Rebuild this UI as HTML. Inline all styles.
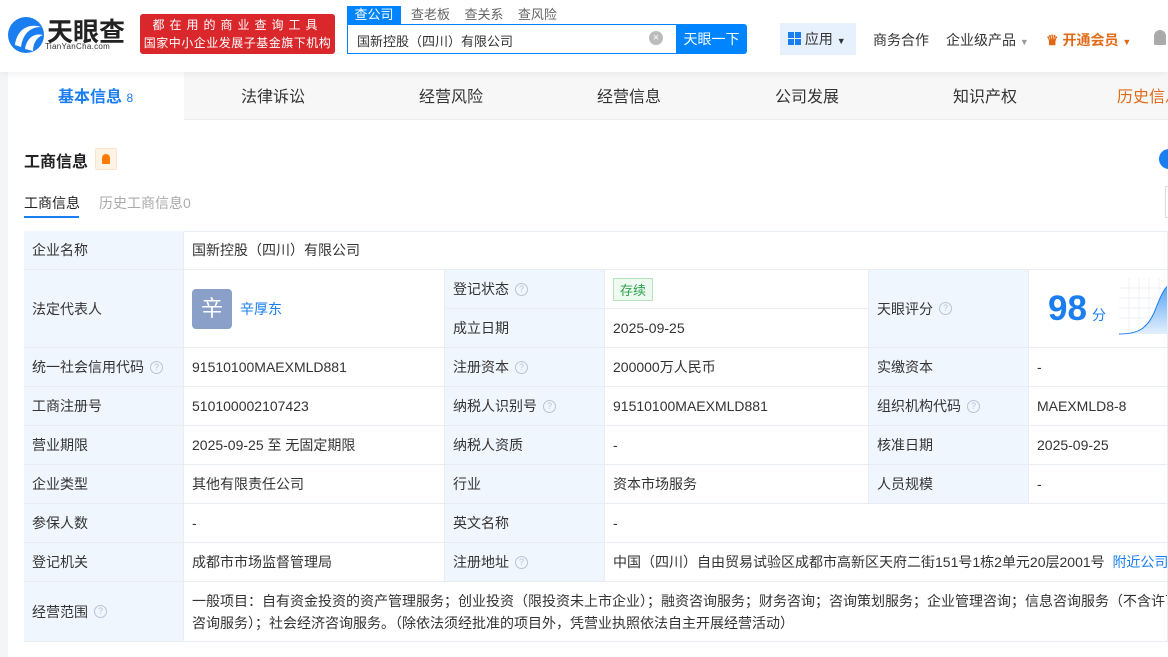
<!DOCTYPE html>
<html><head><meta charset="utf-8"><style>
*{box-sizing:border-box;margin:0;padding:0}
body{width:1168px;height:657px;overflow:hidden;background:#f4f5f7;font-family:"Liberation Sans","Noto Sans CJK SC",sans-serif;color:#333;position:relative;font-size:14px}
.a{position:absolute}
.hdr{left:0;top:0;width:1168px;height:72px;background:#fff;box-shadow:0 2px 6px rgba(0,0,0,.06);z-index:2}
.nav{left:8px;top:72px;width:1160px;height:48px;background:#f7f7f7;border-bottom:1px solid #eee}
.nav span{position:absolute;top:11px;font-size:16px;color:#333;white-space:nowrap}
.card{left:8px;top:120px;width:1160px;height:537px;background:#fff}
.c{position:absolute;border-right:1px solid #e8edf3;border-bottom:1px solid #e8edf3;padding-left:8px;display:flex;align-items:center;font-size:14px;color:#333;white-space:nowrap}
.l{background:#f0f6fe}
.q{display:inline-block;width:13px;height:13px;border:1px solid #b8c4d2;border-radius:50%;font-size:9px;color:#b8c4d2;text-align:center;line-height:11px;margin-left:6px}
</style></head><body>
<div class="a hdr">
 <svg class="a" style="left:7px;top:15px" width="38" height="40" viewBox="0 0 38 40"><circle cx="19" cy="20" r="18" fill="#1a7ef0"/><path d="M8 30 C10 14 22 8 34 12 C24 12 16 18 14 32Z" fill="#fff"/><path d="M18 34 C20 22 28 18 36 20 C30 22 26 28 26 36Z" fill="#fff"/></svg>
 <div class="a" style="left:47px;top:12px;font-size:26px;font-weight:bold;color:#222;letter-spacing:0">天眼查</div>
 <div class="a" style="left:45px;top:42px;font-size:8px;color:#333;letter-spacing:.3px">TianYanCha.com</div>
 <div class="a" style="left:140px;top:14px;width:195px;height:40px;background:#d9272b;border-radius:3px;color:#fff;font-size:12px;line-height:18px;text-align:center;padding-top:2px"><div style="letter-spacing:5px">都在用的商业查询工具</div><div style="letter-spacing:.5px">国家中小企业发展子基金旗下机构</div></div>
 <div class="a" style="left:347px;top:6px;width:54px;height:18px;background:#0084ff;color:#fff;font-size:13px;text-align:center;line-height:18px">查公司</div>
 <div class="a" style="left:411px;top:6px;font-size:13px;color:#666;line-height:18px">查老板&nbsp;&nbsp;&nbsp;&nbsp;查关系&nbsp;&nbsp;&nbsp;&nbsp;查风险</div>
 <div class="a" style="left:347px;top:24px;width:330px;height:30px;border:1px solid #0084ff;background:#fff;font-size:13px;padding:6px 9px">国新控股（四川）有限公司</div>
 <div class="a" style="left:649px;top:31px;width:14px;height:14px;border-radius:50%;background:#bbb;color:#fff;font-size:11px;text-align:center;line-height:14px">×</div>
 <div class="a" style="left:676px;top:24px;width:71px;height:30px;background:#0084ff;color:#fff;font-size:14px;text-align:center;line-height:30px;border-radius:0 3px 3px 0">天眼一下</div>
 <div class="a" style="left:780px;top:23px;width:76px;height:32px;background:#e6f1fd;font-size:14px;line-height:32px;padding-left:8px"><span style="display:inline-block;width:13px;height:13px;background:linear-gradient(#1a7ef0,#1a7ef0) 0 0/6px 6px no-repeat,linear-gradient(#1a7ef0,#1a7ef0) 7px 0/6px 6px no-repeat,linear-gradient(#1a7ef0,#1a7ef0) 0 7px/6px 6px no-repeat,linear-gradient(#1a7ef0,#1a7ef0) 7px 7px/6px 6px no-repeat;vertical-align:-1px"></span> 应用 <span style="font-size:9px">▼</span></div>
 <div class="a" style="left:873px;top:30px;font-size:14px">商务合作</div>
 <div class="a" style="left:946px;top:30px;font-size:14px">企业级产品 <span style="color:#999;font-size:9px">▼</span></div>
 <div class="a" style="left:1046px;top:30px;font-size:14px;color:#e06a15;font-weight:bold">♛ 开通会员 <span style="font-size:9px">▼</span></div>
 <div class="a" style="left:1154px;top:30px;width:12px;height:15px;background:#aaa;border-radius:6px 6px 1px 1px"></div>
</div>
<div class="a nav">
 <div class="a" style="left:0;top:0;width:176px;height:48px;background:#fff"></div>
 <span style="left:50px;color:#1a7ef0;font-weight:bold">基本信息 <small style="font-size:12px;font-weight:normal">8</small></span>
 <span style="left:233px">法律诉讼</span><span style="left:411px">经营风险</span><span style="left:589px">经营信息</span><span style="left:767px">公司发展</span><span style="left:945px">知识产权</span><span style="left:1109px;color:#e06a15">历史信息</span>
</div>
<div class="a card"></div>
<div class="a" style="left:24px;top:148px;font-size:16px;font-weight:bold;color:#222">工商信息</div>
<div class="a" style="left:95px;top:148px;width:22px;height:22px;background:#fff3e6;border:1px solid #fde2c6;border-radius:2px"><div style="margin:5px auto;width:8px;height:10px;background:#ff7a00;border-radius:4px 4px 1px 1px"></div></div>
<div class="a" style="left:1159px;top:149px;width:20px;height:20px;border-radius:50%;background:#1a7ef0"></div>
<div class="a" style="left:1165px;top:186px;width:10px;height:32px;border:1px solid #ddd"></div>
<div class="a" style="left:24px;top:193px;font-size:14px;color:#222">工商信息</div>
<div class="a" style="left:24px;top:216px;width:55px;height:2px;background:#1a7ef0"></div>
<div class="a" style="left:99px;top:193px;font-size:14px;color:#aaa">历史工商信息0</div>
<div class="a" style="left:24px;top:231px;width:1144px;border-top:1px solid #e8edf3"></div>
<div class="a" style="left:24px;top:231px;height:411px;border-left:1px solid #e8edf3"></div>

<div class="c l" style="left:24px;top:231px;width:160px;height:39px">企业名称</div>
<div class="c" style="left:184px;top:231px;width:984px;height:39px">国新控股（四川）有限公司</div>

<div class="c l" style="left:24px;top:270px;width:160px;height:78px">法定代表人</div>
<div class="c" style="left:184px;top:270px;width:261px;height:78px"><div style="width:40px;height:40px;background:#8aa0c9;border-radius:4px;color:#fff;font-size:22px;text-align:center;line-height:40px">辛</div><span style="color:#1a7ef0;margin-left:8px">辛厚东</span></div>
<div class="c l" style="left:445px;top:270px;width:160px;height:39px">登记状态<span class="q">?</span></div>
<div class="c" style="left:605px;top:270px;width:264px;height:39px"><span style="border:1px solid #b7e2bf;background:#eef9f0;color:#2ca14a;padding:1px 6px;font-size:13px">存续</span></div>
<div class="c l" style="left:445px;top:309px;width:160px;height:39px">成立日期</div>
<div class="c" style="left:605px;top:309px;width:264px;height:39px">2025-09-25</div>
<div class="c l" style="left:869px;top:270px;width:160px;height:78px">天眼评分<span class="q">?</span></div>
<div class="c" style="left:1029px;top:270px;width:139px;height:78px;overflow:hidden;background:#fff"><span style="color:#1a7ef0;font-size:35px;font-weight:bold;margin-left:11px">98</span><span style="color:#1a7ef0;font-size:14px;margin:12px 0 0 5px">分</span>
<svg class="a" style="left:90px;top:8px" width="60" height="60"><defs><linearGradient id="g" x1="0" y1="0" x2="0" y2="1"><stop offset="0" stop-color="#4a9af5"/><stop offset="1" stop-color="#e3f0fe"/></linearGradient></defs><path d="M0 10H60M0 20H60M0 30H60M0 40H60M10 0V56M20 0V56M30 0V56M40 0V56" stroke="#eef2f7"/><path d="M0 56 C20 56 28 50 35 35 C42 18 45 5 60 2 V56Z" fill="url(#g)"/><path d="M0 56 C20 56 28 50 35 35 C42 18 45 5 60 2" stroke="#1a7ef0" fill="none"/><text y="64" font-size="5" fill="#1a7ef0">0  1  3  15</text></svg></div>

<div class="c l" style="left:24px;top:348px;width:160px;height:39px">统一社会信用代码<span class="q">?</span></div>
<div class="c" style="left:184px;top:348px;width:261px;height:39px">91510100MAEXMLD881</div>
<div class="c l" style="left:445px;top:348px;width:160px;height:39px">注册资本<span class="q">?</span></div>
<div class="c" style="left:605px;top:348px;width:264px;height:39px">200000万人民币</div>
<div class="c l" style="left:869px;top:348px;width:160px;height:39px">实缴资本</div>
<div class="c" style="left:1029px;top:348px;width:139px;height:39px">-</div>

<div class="c l" style="left:24px;top:387px;width:160px;height:39px">工商注册号</div>
<div class="c" style="left:184px;top:387px;width:261px;height:39px">510100002107423</div>
<div class="c l" style="left:445px;top:387px;width:160px;height:39px">纳税人识别号<span class="q">?</span></div>
<div class="c" style="left:605px;top:387px;width:264px;height:39px">91510100MAEXMLD881</div>
<div class="c l" style="left:869px;top:387px;width:160px;height:39px">组织机构代码<span class="q">?</span></div>
<div class="c" style="left:1029px;top:387px;width:139px;height:39px">MAEXMLD8-8</div>

<div class="c l" style="left:24px;top:426px;width:160px;height:39px">营业期限</div>
<div class="c" style="left:184px;top:426px;width:261px;height:39px">2025-09-25 至 无固定期限</div>
<div class="c l" style="left:445px;top:426px;width:160px;height:39px">纳税人资质</div>
<div class="c" style="left:605px;top:426px;width:264px;height:39px">-</div>
<div class="c l" style="left:869px;top:426px;width:160px;height:39px">核准日期</div>
<div class="c" style="left:1029px;top:426px;width:139px;height:39px">2025-09-25</div>

<div class="c l" style="left:24px;top:465px;width:160px;height:39px">企业类型</div>
<div class="c" style="left:184px;top:465px;width:261px;height:39px">其他有限责任公司</div>
<div class="c l" style="left:445px;top:465px;width:160px;height:39px">行业</div>
<div class="c" style="left:605px;top:465px;width:264px;height:39px">资本市场服务</div>
<div class="c l" style="left:869px;top:465px;width:160px;height:39px">人员规模</div>
<div class="c" style="left:1029px;top:465px;width:139px;height:39px">-</div>

<div class="c l" style="left:24px;top:504px;width:160px;height:39px">参保人数</div>
<div class="c" style="left:184px;top:504px;width:261px;height:39px">-</div>
<div class="c l" style="left:445px;top:504px;width:160px;height:39px">英文名称</div>
<div class="c" style="left:605px;top:504px;width:563px;height:39px">-</div>

<div class="c l" style="left:24px;top:543px;width:160px;height:39px">登记机关</div>
<div class="c" style="left:184px;top:543px;width:261px;height:39px">成都市市场监督管理局</div>
<div class="c l" style="left:445px;top:543px;width:160px;height:39px">注册地址<span class="q">?</span></div>
<div class="c" style="left:605px;top:543px;width:563px;height:39px;overflow:hidden">中国（四川）自由贸易试验区成都市高新区天府二街151号1栋2单元20层2001号&nbsp;&nbsp;<span style="color:#1a7ef0">附近公司</span></div>

<div class="c l" style="left:24px;top:582px;width:160px;height:60px">经营范围<span class="q">?</span></div>
<div class="c" style="left:184px;top:582px;width:984px;height:60px;overflow:hidden;line-height:22px;display:block;padding-top:8px">一般项目：自有资金投资的资产管理服务；创业投资（限投资未上市企业）；融资咨询服务；财务咨询；咨询策划服务；企业管理咨询；信息咨询服务（不含许可类信息<br>咨询服务）；社会经济咨询服务。（除依法须经批准的项目外，凭营业执照依法自主开展经营活动）</div>
</body></html>
